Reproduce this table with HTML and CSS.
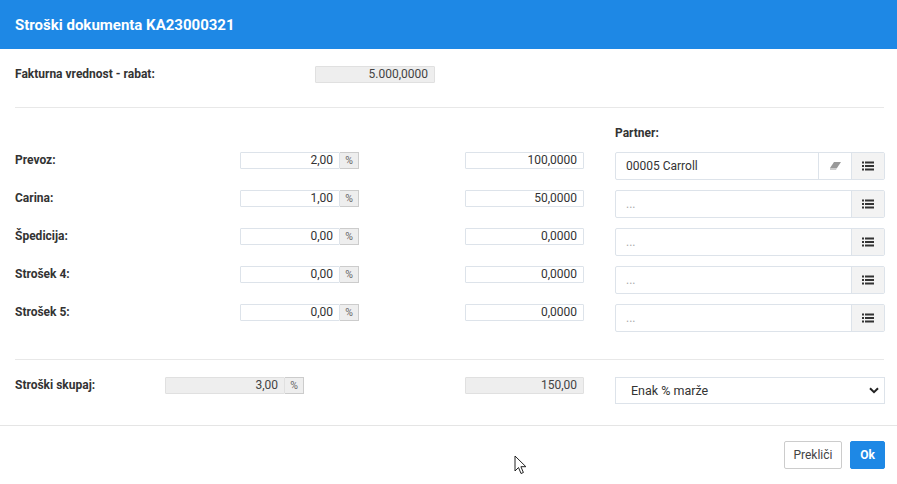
FILE: index.html
```html
<!DOCTYPE html>
<html lang="sl">
<head>
<meta charset="utf-8">
<title>Stroški dokumenta</title>
<link rel="stylesheet" href="styles.css">
</head>
<body>
<div class="modal">
  <div class="header">Stroški dokumenta KA23000321</div>
  <div class="content">
    <div class="fak-row">
      <span class="lbl">Fakturna vrednost - rabat:</span>
      <div class="inp ro w120">5.000,0000</div>
    </div>
    <div class="sep"></div>

    <div class="grid">
      <div class="partner-head">Partner:</div>

      <span class="lbl">Prevoz:</span>
      <div class="pct"><div class="inp">2,00</div><span class="addon">%</span></div>
      <div class="inp amt">100,0000</div>
      <div class="partner">
        <div class="pinp">00005 Carroll</div>
        <span class="pbtn"><svg width="11" height="9" viewBox="0 0 11 9"><path d="M4 0h7L7 6H0z" fill="#999"/><path d="M0 6h7L6 8H0z" fill="#ccc"/></svg></span>
        <span class="pbtn"><svg width="12" height="10" viewBox="0 0 12 10"><rect x="0" y="0.5" width="2" height="2" fill="#333"/><rect x="3" y="0.5" width="9" height="2" fill="#333"/><rect x="0" y="4" width="2" height="2" fill="#333"/><rect x="3" y="4" width="9" height="2" fill="#333"/><rect x="0" y="7.5" width="2" height="2" fill="#333"/><rect x="3" y="7.5" width="9" height="2" fill="#333"/></svg></span>
      </div>

      <span class="lbl">Carina:</span>
      <div class="pct"><div class="inp">1,00</div><span class="addon">%</span></div>
      <div class="inp amt">50,0000</div>
      <div class="partner">
        <div class="pinp ph">...</div>
        <span class="pbtn"><svg width="12" height="10" viewBox="0 0 12 10"><rect x="0" y="0.5" width="2" height="2" fill="#333"/><rect x="3" y="0.5" width="9" height="2" fill="#333"/><rect x="0" y="4" width="2" height="2" fill="#333"/><rect x="3" y="4" width="9" height="2" fill="#333"/><rect x="0" y="7.5" width="2" height="2" fill="#333"/><rect x="3" y="7.5" width="9" height="2" fill="#333"/></svg></span>
      </div>

      <span class="lbl">Špedicija:</span>
      <div class="pct"><div class="inp">0,00</div><span class="addon">%</span></div>
      <div class="inp amt">0,0000</div>
      <div class="partner">
        <div class="pinp ph">...</div>
        <span class="pbtn"><svg width="12" height="10" viewBox="0 0 12 10"><rect x="0" y="0.5" width="2" height="2" fill="#333"/><rect x="3" y="0.5" width="9" height="2" fill="#333"/><rect x="0" y="4" width="2" height="2" fill="#333"/><rect x="3" y="4" width="9" height="2" fill="#333"/><rect x="0" y="7.5" width="2" height="2" fill="#333"/><rect x="3" y="7.5" width="9" height="2" fill="#333"/></svg></span>
      </div>

      <span class="lbl">Strošek 4:</span>
      <div class="pct"><div class="inp">0,00</div><span class="addon">%</span></div>
      <div class="inp amt">0,0000</div>
      <div class="partner">
        <div class="pinp ph">...</div>
        <span class="pbtn"><svg width="12" height="10" viewBox="0 0 12 10"><rect x="0" y="0.5" width="2" height="2" fill="#333"/><rect x="3" y="0.5" width="9" height="2" fill="#333"/><rect x="0" y="4" width="2" height="2" fill="#333"/><rect x="3" y="4" width="9" height="2" fill="#333"/><rect x="0" y="7.5" width="2" height="2" fill="#333"/><rect x="3" y="7.5" width="9" height="2" fill="#333"/></svg></span>
      </div>

      <span class="lbl">Strošek 5:</span>
      <div class="pct"><div class="inp">0,00</div><span class="addon">%</span></div>
      <div class="inp amt">0,0000</div>
      <div class="partner">
        <div class="pinp ph">...</div>
        <span class="pbtn"><svg width="12" height="10" viewBox="0 0 12 10"><rect x="0" y="0.5" width="2" height="2" fill="#333"/><rect x="3" y="0.5" width="9" height="2" fill="#333"/><rect x="0" y="4" width="2" height="2" fill="#333"/><rect x="3" y="4" width="9" height="2" fill="#333"/><rect x="0" y="7.5" width="2" height="2" fill="#333"/><rect x="3" y="7.5" width="9" height="2" fill="#333"/></svg></span>
      </div>
    </div>

    <div class="sep sep2"></div>

    <div class="sum">
      <span class="lbl">Stroški skupaj:</span>
      <div class="pct"><div class="inp ro">3,00</div><span class="addon">%</span></div>
      <div class="inp ro amt">150,00</div>
      <div class="select">
        <span>Enak % marže</span>
        <svg width="10" height="7" viewBox="0 0 10 7"><path d="M1 1.2l4 4 4-4" fill="none" stroke="#222" stroke-width="2"/></svg>
      </div>
    </div>
  </div>
  <div class="footer">
    <button class="btn cancel">Prekliči</button>
    <button class="btn ok">Ok</button>
  </div>
</div>
<svg class="cursor" width="14" height="20" viewBox="0 0 14 20"><path d="M1 1v15l3.5-3.5 2.5 6 2.4-1-2.5-5.8h5z" fill="#fff" stroke="#222" stroke-width="1"/></svg>
</body>
</html>
```
FILE: styles.css
```css
* { box-sizing: border-box; }
html, body { margin: 0; padding: 0; background: #fff; }
body {
  font-family: Roboto, "Liberation Sans", Arial, sans-serif;
  font-size: 12px;
  color: #333;
  width: 897px;
  height: 484px;
  overflow: hidden;
  position: relative;
}
.header {
  height: 49px;
  background: #1e88e5;
  color: #fff;
  font-weight: bold;
  font-size: 15px;
  display: flex;
  align-items: center;
  padding: 0 15px;
}
.content { padding: 17px 12px 21px 15px; }
.lbl { font-weight: bold; line-height: 17px; color: #333; }
.fak-row {
  display: grid;
  grid-template-columns: 300px 120px;
  height: 17px;
}
.sep { border-top: 1px solid #e8e8e8; margin: 24px 1px 0 0; height: 0; }
.sep2 { margin-top: 27px; }

.inp {
  height: 17px;
  border: 1px solid #dde3ea;
  background: #fff;
  text-align: right;
  padding: 0 6px;
  line-height: 15px;
  font-size: 12px;
  color: #333;
  border-radius: 1px;
}
.inp.ro { background: #eee; border-color: #e0e0e0; color: #444; }
.w120 { width: 120px; }

.grid {
  display: grid;
  grid-template-columns: 225px 119px 106px 119px 31px 270px;
  grid-template-rows: 24px repeat(5, 28px);
  row-gap: 10px;
  margin-top: 10px;
}
.partner-head {
  grid-column: 6;
  font-weight: bold;
  line-height: 17px;
  align-self: end;
}
.grid .lbl { grid-column: 1; }
.grid .pct { grid-column: 2; }
.grid .amt { grid-column: 4; }
.grid .partner { grid-column: 6; }

.pct { display: flex; height: 17px; }
.pct .inp { flex: 1; }
.addon {
  width: 19px;
  height: 17px;
  background: #eee;
  border: 1px solid #ccc;
  border-left: none;
  font-size: 10.5px;
  color: #666;
  text-align: center;
  line-height: 15px;
}
.partner {
  display: flex;
  height: 28px;
  border: 1px solid #dde3ea;
  border-radius: 2px;
}
.pinp {
  flex: 1;
  padding-left: 10px;
  line-height: 26px;
  font-size: 12px;
  color: #333;
}
.pinp.ph { color: #aaa; }
.pbtn {
  width: 33px;
  border-left: 1px solid #dde3ea;
  display: flex;
  align-items: center;
  justify-content: center;
  background: #fff;
}
.pbtn:last-child { background: #f3f3f3; }

.sum {
  display: grid;
  grid-template-columns: 150px 139px 161px 119px 31px 270px;
  margin-top: 17px;
  height: 27px;
}
.sum .lbl { grid-column: 1; }
.sum .pct { grid-column: 2; }
.sum .amt { grid-column: 4; }
.sum .select { grid-column: 6; }
.select {
  height: 27px;
  border: 1px solid #dde3ea;
  display: flex;
  align-items: center;
  justify-content: space-between;
  padding: 0 5px 0 15px;
  font-size: 12.5px;
  color: #333;
}

.footer {
  border-top: 1px solid #e5e5e5;
  padding: 15px 12px 0 0;
  display: flex;
  justify-content: flex-end;
  gap: 8px;
}
.btn {
  height: 28px;
  font-family: Roboto, "Liberation Sans", Arial, sans-serif;
  font-size: 12px;
  border-radius: 2px;
  padding: 0;
}
.cancel { width: 58px; background: #fff; border: 1px solid #ccc; color: #444; }
.ok { width: 35px; background: #1e88e5; border: 1px solid #1e88e5; color: #fff; font-weight: bold; }

.cursor { position: absolute; left: 514px; top: 455px; }
```
